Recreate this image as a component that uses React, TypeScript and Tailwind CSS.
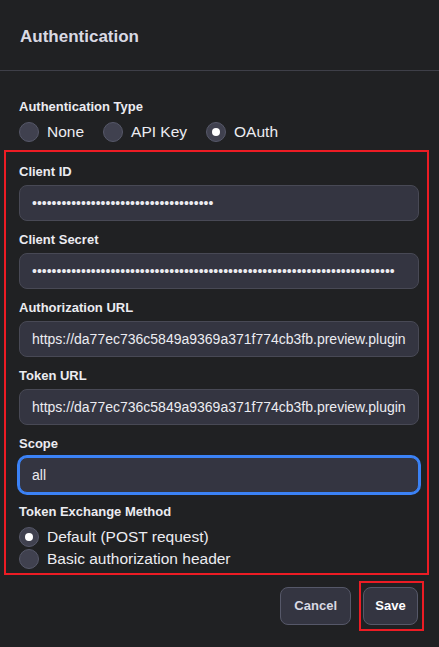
import React from "react";

const FONT = { fontFamily: '"Liberation Sans", Arial, sans-serif' };

function Radio({ checked, label }: { checked?: boolean; label: string }) {
  return (
    <div className="flex items-center h-[22px]">
      <span className="w-[20px] h-[20px] rounded-full bg-[#40414f] border border-[#565869] flex items-center justify-center shrink-0">
        {checked && <span className="w-[8px] h-[8px] rounded-full bg-white" />}
      </span>
      <span className="ml-[8px] text-[15.5px] text-[#ececf1] leading-none">{label}</span>
    </div>
  );
}

function Field({
  label,
  value,
  password,
  focused,
}: {
  label: string;
  value: string;
  password?: boolean;
  focused?: boolean;
}) {
  return (
    <div className="flex flex-col">
      <div className="h-[20px] flex items-center text-[13px] font-bold text-[#ececf1]">{label}</div>
      <input
        readOnly
        type={password ? "password" : "text"}
        value={value}
        style={FONT}
        className={
          "mt-[3px] h-[36px] w-full rounded-[8px] bg-[#343541] px-[12px] text-[14px] text-[#ececf1] outline-none " +
          (focused
            ? "border border-[#3b82f6] ring-2 ring-[#3b82f6]"
            : "border border-[#484955]")
        }
      />
    </div>
  );
}

export default function App() {
  const url = "https://da77ec736c5849a9369a371f774cb3fb.preview.pluginlab.ai/oauth/authorize";
  return (
    <div className="w-[439px] h-[647px] bg-[#202123] flex flex-col" style={FONT}>
      <div className="h-[71px] flex items-center px-[20px] pt-[3px] border-b border-[#3e3f48]">
        <h1 className="text-[17px] font-bold text-[#d9d9e3]">Authentication</h1>
      </div>
      <div className="pt-[26px] px-[19px]">
        <div className="h-[20px] flex items-center text-[13px] font-bold text-[#ececf1]">Authentication Type</div>
        <div className="flex items-center gap-[19px] mt-[4px]">
          <Radio label="None" />
          <Radio label="API Key" />
          <Radio label="OAuth" checked />
        </div>
      </div>
      <div className="mt-[7px] ml-[4px] w-[425px] border-2 border-[#ec1c24] pl-[13px] pr-[8px] pt-[10px] pb-[3px] flex flex-col gap-[9px]">
        <Field label="Client ID" value={"x".repeat(37)} password />
        <Field label="Client Secret" value={"x".repeat(74)} password />
        <Field label="Authorization URL" value={url} />
        <Field label="Token URL" value={url.replace("authorize", "token")} />
        <Field label="Scope" value="all" focused />
        <div className="flex flex-col">
          <div className="h-[20px] flex items-center text-[13px] font-bold text-[#ececf1]">Token Exchange Method</div>
          <div className="mt-[4px] flex flex-col">
            <Radio label="Default (POST request)" checked />
            <Radio label="Basic authorization header" />
          </div>
        </div>
      </div>
      <div className="flex justify-end items-center pr-[15px] mt-[6px] gap-[8px]">
        <button className="h-[38px] px-[13px] rounded-[8px] bg-[#343541] border border-[#565869] text-[13px] font-bold text-[#d9d9e3]">
          Cancel
        </button>
        <div className="border-2 border-[#ec1c24] p-[2px] pr-[4px] pt-[4px] pb-[4px]">
          <button className="h-[38px] w-[55px] rounded-[8px] bg-[#343541] border border-[#565869] text-[13px] font-bold text-white">
            Save
          </button>
        </div>
      </div>
    </div>
  );
}
